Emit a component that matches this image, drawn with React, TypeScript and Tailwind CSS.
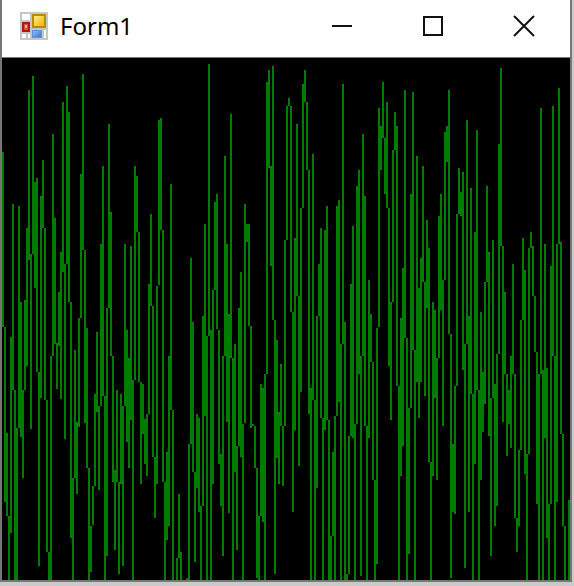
const CAPTION_FONT = "font-['Noto_Sans','Open_Sans',sans-serif]";

// Visible height of the plot; traces that reach it run off the bottom.
const H = 522;

// One [top, bottom] pair per sample column, null where the trace is off screen.
const SPANS: ([number, number] | null)[] = [
  [94, 269], [269, 444], [375, 458], [458, H], [279, 475], [146, 332], [332, H], [370, H], [148, 370], [244, 379],
  [332, 420], [242, 332], [170, 308], [32, 202], [196, 371], [18, 196], [124, 230], [120, 314], [314, 508], [138, 340],
  [102, 170], [170, 342], [342, 494], [494, H], [298, H], [76, 298], [160, 286], [285, 331], [234, 288], [194, 341],
  [44, 214], [206, 381], [28, 206], [54, 244], [244, 480], [420, H], [292, 420], [364, 436], [260, 369], [116, 260],
  [16, 192], [192, 365], [270, 410], [410, H], [468, 514], [428, 467], [336, 428], [274, 354], [348, 432], [186, 348],
  [108, 338], [338, H], [250, 498], [66, 250], [154, 298], [298, 424], [412, 492], [332, 424], [424, 516], [336, 426],
  [348, 508], [186, 348], [272, 384], [300, 410], [188, 362], [322, H], [108, 322], [118, 174], [174, 324], [324, 426],
  [326, 376], [361, 406], [356, 418], [226, 356], [156, 248], [248, 399], [399, 460], [228, 426], [62, 227], [60, 172],
  [172, 424], [424, H], [394, 482], [298, 468], [126, 352], [352, H], null, [500, H], [436, 500], [494, H],
  null, null, [520, H], [386, H], [200, 386], [264, 414], [414, 504], [356, 430], [360, 454], [448, H],
  [258, 448], [166, 358], [278, H], [6, 278], [272, H], [232, 426], [144, 232], [136, 271], [272, 406], [396, 448],
  [298, 498], [98, 298], [186, 364], [256, 455], [56, 300], [300, H], [286, 414], [388, 492], [250, 388], [214, 399],
  [366, H], [146, 365], [166, 184], [166, 268], [268, 370], [366, 368], [368, 410], [410, 520], [458, H], [326, 458],
  [330, 464], [316, H], [24, 316], [12, 110], [108, 208], [8, 262], [262, 516], [282, 400], [354, 426], [306, 368],
  [368, 428], [182, 368], [48, 182], [40, 48], [48, 254], [254, 454], [180, 372], [66, 238], [238, 408], [150, 334],
  [26, 150], [12, 44], [44, 112], [112, 356], [330, H], [96, 342], [342, H], [258, 430], [206, 258], [170, 360],
  [360, H], [172, 372], [148, 362], [362, H], [478, H], [394, 478], [358, H], [148, 358], [142, 344], [286, H],
  [26, 286], [264, H], [516, H], [378, 516], [226, 378], [168, 380], [366, H], [128, 366], [112, 316], [298, 518],
  [76, 298], [138, 368], [368, H], [222, 380], [256, 304], [304, 422], [422, H], [270, 506], [50, 269], [68, 112],
  [24, 80], [80, 136], [44, 150], [150, 308], [244, 362], [92, 244], [54, 92], [68, 328], [328, H], [260, 418],
  [210, 388], [32, 280], [280, H], [350, 496], [136, 350], [34, 292], [292, H], [98, 324], [230, 360], [200, 324],
  [108, 224], [224, 338], [162, 250], [190, 404], [404, H], [244, 418], [252, 340], [300, 422], [158, 300], [136, 252],
  [222, 368], [74, 222], [68, 104], [32, 276], [276, 520], [386, 454], [328, 456], [156, 328], [110, 156], [134, 158],
  [114, 312], [286, 510], [62, 286], [258, 454], [130, 336], [336, H], [174, 406], [72, 332], [332, H], [254, 422],
  [314, 374], [224, 346], [128, 224], [194, 378], [340, 498], [182, 340], [326, 468], [296, 448], [86, 296], [10, 188],
  [188, 364], [234, 316], [316, 398], [332, 366], [298, 390], [206, 316], [316, 460], [460, 494], [392, 468], [262, 392],
  [180, 262], [212, 416], [396, H], [190, 396], [174, 190], [188, 238], [238, 294], [294, 446], [316, H], [50, 316],
  [312, H], [186, 380], [310, 480], [446, H], [208, 446], [48, 298], [298, H], [186, 444], [30, 186], [184, 376],
  [376, 468], [468, H], null, [442, H],
];

function AppIcon() {
  return (
    <svg viewBox="0 0 28 28" className="size-7" aria-hidden="true">
      <defs>
        <linearGradient id="gold" x1="0" y1="0" x2="1" y2="1">
          <stop offset="0" stopColor="#ffeb8c" />
          <stop offset="1" stopColor="#f0b400" />
        </linearGradient>
        <linearGradient id="blue" x1="0" y1="0" x2="1" y2="1">
          <stop offset="0" stopColor="#8cb8f8" />
          <stop offset="1" stopColor="#3c78dc" />
        </linearGradient>
      </defs>
      <rect width="28" height="28" fill="#c6c6c6" />
      <path d="M2 2h8v6H2zM2 22h4v4H2zM8 22h2v4H8zM24 18h2v8h-2z" fill="#fff" />
      <rect x="2" y="10" width="8" height="10" fill="#a81c10" />
      <rect x="4" y="12" width="4" height="6" fill="#dc5040" />
      <rect x="5" y="13" width="2" height="3" fill="#f4a498" />
      <rect x="12" y="2" width="14" height="14" fill="#b88a00" />
      <rect x="14" y="4" width="10" height="10" fill="url(#gold)" />
      <rect x="12" y="18" width="10" height="8" fill="#5e90e4" />
      <rect x="13" y="19" width="8" height="6" fill="url(#blue)" />
    </svg>
  );
}

function CaptionButton({ label, d }: { label: string; d: string }) {
  return (
    <button type="button" aria-label={label} className="flex w-[91px] items-center justify-center hover:bg-gray-200">
      <svg viewBox="0 0 22 22" className="size-[22px]" fill="none" stroke="#111" strokeWidth="2" aria-hidden="true">
        <path d={d} />
      </svg>
    </button>
  );
}

function Waveform() {
  return (
    <svg
      viewBox={`0 0 568 ${H}`}
      preserveAspectRatio="none"
      className="block h-full w-full"
      role="img"
      aria-label="Waveform"
    >
      {SPANS.map((span, i) =>
        span ? <rect key={i} x={i * 2} y={span[0]} width="2" height={span[1] - span[0]} fill="#007c00" /> : null,
      )}
    </svg>
  );
}

export default function App() {
  return (
    <div className="h-screen bg-[#cacaca] pr-0.5 pb-1">
      <div className="flex h-full flex-col border-r-2 border-b-2 border-l-2 border-[#777] bg-white">
        <header className="flex h-[57px] shrink-0 items-stretch pr-px pb-[5px] pl-[18px]">
          <div className="flex flex-1 items-center gap-3">
            <AppIcon />
            <h1 className={`${CAPTION_FONT} text-2xl text-black`}>Form1</h1>
          </div>
          <CaptionButton label="Minimize" d="M1 11h20" />
          <CaptionButton label="Maximize" d="M2 2h18v18H2z" />
          <CaptionButton label="Close" d="M1 1l20 20M21 1L1 21" />
        </header>
        <main className="min-h-0 flex-1 border-t border-[#777] bg-black">
          <Waveform />
        </main>
      </div>
    </div>
  );
}
